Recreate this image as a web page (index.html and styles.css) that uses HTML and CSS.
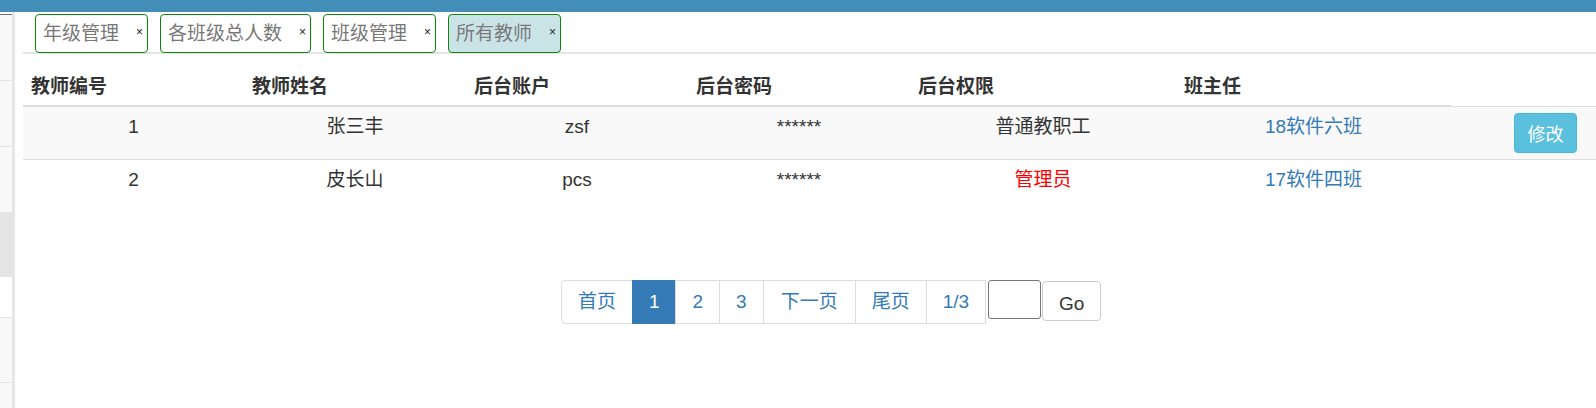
FILE: index.html
```html
<!DOCTYPE html>
<html lang="zh-CN">
<head>
<meta charset="utf-8">
<title>所有教师</title>
<link rel="stylesheet" href="styles.css">
</head>
<body>
<div class="topbar"></div>
<div class="layout">
  <aside class="sidebar">
    <div class="sb-gap"></div>
    <div class="sb-item sb-first"></div>
    <div class="sb-item"></div>
    <div class="sb-item sb-short"></div>
    <div class="sb-active"></div>
    <div class="sb-white"></div>
    <div class="sb-item sb-top"></div>
    <div class="sb-item sb-top sb-last"></div>
  </aside>
  <main class="main">
    <div class="tabs">
      <div class="tab">年级管理<span class="tab-close">×</span></div>
      <div class="tab">各班级总人数<span class="tab-close">×</span></div>
      <div class="tab">班级管理<span class="tab-close">×</span></div>
      <div class="tab tab-active">所有教师<span class="tab-close">×</span></div>
    </div>
    <div class="table">
      <div class="thead">
        <div class="th">教师编号</div>
        <div class="th">教师姓名</div>
        <div class="th">后台账户</div>
        <div class="th">后台密码</div>
        <div class="th">后台权限</div>
        <div class="th">班主任</div>
      </div>
      <div class="tr tr-striped">
        <div class="td">1</div>
        <div class="td">张三丰</div>
        <div class="td">zsf</div>
        <div class="td">******</div>
        <div class="td">普通教职工</div>
        <div class="td"><a class="link" href="#">18软件六班</a></div>
        <div class="td td-action"><button class="btn-info">修改</button></div>
      </div>
      <div class="tr">
        <div class="td">2</div>
        <div class="td">皮长山</div>
        <div class="td">pcs</div>
        <div class="td">******</div>
        <div class="td td-admin">管理员</div>
        <div class="td"><a class="link" href="#">17软件四班</a></div>
        <div class="td td-action"></div>
      </div>
    </div>
    <div class="pager-row">
      <ul class="pagination">
        <li class="page page-first">首页</li>
        <li class="page page-active">1</li>
        <li class="page">2</li>
        <li class="page">3</li>
        <li class="page page-wide">下一页</li>
        <li class="page">尾页</li>
        <li class="page page-last">1/3</li>
      </ul>
      <input class="page-input" type="text">
      <button class="btn-go">Go</button>
    </div>
  </main>
</div>
</body>
</html>
```
FILE: styles.css
```css
*, *::before, *::after {
  box-sizing: border-box;
}
html, body {
  margin: 0;
  padding: 0;
  background: #fff;
}
body {
  font-family: "Liberation Sans", Arial, "Noto Sans CJK SC", sans-serif;
  font-size: 19px;
  color: #333;
  width: 1596px;
  height: 408px;
  overflow: hidden;
}
.topbar {
  height: 12px;
  background: #438eb9;
}
.layout {
  display: flex;
  height: 396px;
}
.sidebar {
  width: 15px;
  border-right: 3px solid #e6e6e6;
  background: #f8f8f8;
  display: flex;
  flex-direction: column;
}
.sb-gap {
  height: 2px;
  background: #fff;
}
.sb-item {
  background: #f8f8f8;
  border-bottom: 1px solid #e4e4e4;
  height: 66px;
}
.sb-first {
  border-top: 1px solid #6f6f6f;
  height: 67px;
}
.sb-short {
  border-bottom: 0;
  height: 65px;
}
.sb-active {
  height: 65px;
  background: #e5e5e5;
}
.sb-white {
  height: 40px;
  background: #fff;
}
.sb-top {
  border-top: 1px solid #e4e4e4;
  border-bottom: 0;
  height: 65px;
}
.sb-last {
  flex: 1;
}
.main {
  flex: 1;
  min-width: 0;
}
.tabs {
  display: flex;
  gap: 12px;
  margin-left: 8px;
  padding: 2px 0 0 12px;
  height: 42px;
  border-bottom: 2px solid #e5e5e5;
}
.tab {
  position: relative;
  height: 39px;
  line-height: 37px;
  padding: 0 28px 0 7px;
  border: 1px solid #0c870c;
  border-radius: 4px;
  color: #777;
  background: #fff;
  white-space: nowrap;
}
.tab-active {
  background: #c9e3e7;
  color: #7a7a7a;
}
.tab-close {
  position: absolute;
  right: 4px;
  top: 11px;
  font-size: 12px;
  line-height: 1;
  color: #222;
}
.table {
  margin-left: 8px;
}
.thead,
.tr {
  display: grid;
  grid-template-columns: 221px 222px 222px 222px 266px 275px 1fr;
}
.th {
  height: 53px;
  border-bottom: 2px solid #dddddd;
  font-weight: bold;
  padding: 0 8px 6px;
  display: flex;
  align-items: flex-end;
  line-height: 24px;
  color: #333;
}
.tr {
  margin-top: -1px;
  border-top: 1px solid #dddddd;
}
.tr + .tr {
  margin-top: 0;
}
.tr-striped {
  background: #f9f9f9;
}
.td {
  padding: 8px 8px 6px;
  text-align: center;
  line-height: 24px;
  min-height: 52px;
}
.td-admin {
  color: #ff0000;
}
.link {
  color: #337ab7;
  text-decoration: none;
}
.td-action {
  display: flex;
  justify-content: flex-end;
  padding: 6px 19px 6px 8px;
}
.btn-info {
  width: 63px;
  height: 40px;
  background: #5bc0de;
  border: 1px solid #46b8da;
  border-radius: 4px;
  color: #fff;
  font-family: inherit;
  font-size: 18px;
  padding: 0;
}
.pager-row {
  display: flex;
  justify-content: center;
  align-items: flex-start;
  padding-left: 51px;
  margin-top: 68px;
}
.pagination {
  display: flex;
  list-style: none;
  margin: 0;
  padding: 0;
}
.page {
  padding: 0 16px;
  height: 44px;
  line-height: 42px;
  border: 1px solid #dddddd;
  margin-left: -1px;
  color: #337ab7;
  background: #fff;
}
.page-wide {
  padding: 0 17px;
}
.page-first {
  margin-left: 0;
  border-radius: 4px 0 0 4px;
}
.page-last {
  border-radius: 0;
}
.page-active {
  background: #337ab7;
  border-color: #337ab7;
  color: #fff;
}
.page-input {
  width: 53px;
  height: 39px;
  border: 1px solid #767676;
  border-radius: 3px;
  margin: 0 1px 0 2px;
  padding: 0;
}
.btn-go {
  width: 59px;
  height: 40px;
  margin-top: 1px;
  background: #fff;
  border: 1px solid #cccccc;
  border-radius: 4px;
  color: #333;
  font-family: inherit;
  font-size: 19px;
  padding: 5px 0 0;
}
```
